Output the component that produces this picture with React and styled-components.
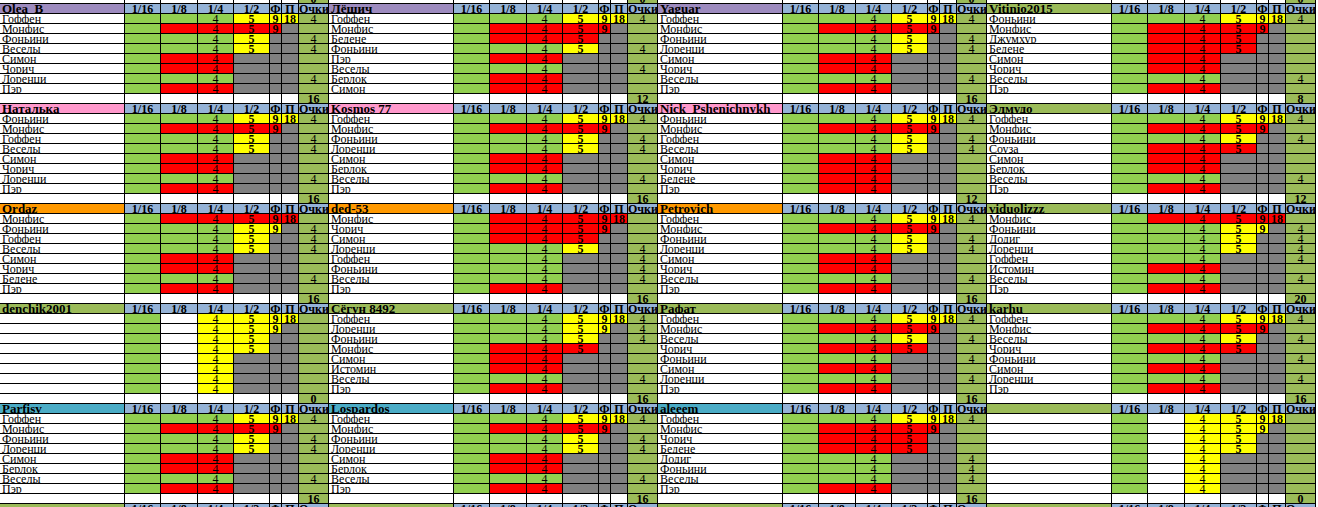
import React from "react";
import styled, { createGlobalStyle } from "styled-components";

// cell fills used in the sheet
const FILL = {
  g: "#92d050",
  r: "#ff0000",
  y: "#ffff00",
  x: "#808080",
  w: "#ffffff",
};

const HEAD = {
  purple: "#9d8bbf",
  pink: "#ff99cc",
  orange: "#ff9900",
  olive: "#9bbb59",
  teal: "#4bacc6",
};

// each letter is the fill of one stage column (1/16 .. П)
const PATTERNS = {
  A: "gggyyy",
  B: "grrrrx",
  C: "gggyxx",
  D: "grrrxx",
  E: "grrxxx",
  F: "gggxxx",
  G: "gggyyx",
  H: "grrrrr",
  P: "gwyyyy",
  Q: "gwyyyx",
  R: "gwyyxx",
  S: "gwyxxx",
};

const STAGE_VALUES = ["", "", "4", "5", "9", "18"];
const LABELS = ["1/16", "1/8", "1/4", "1/2", "Ф", "П", "Очки"];

const rows = (str) => str.split("|").map((r) => r.split(" "));
const EMPTY = rows(" P| Q| R| R| S| S| S| S");

const sections = [
  [
    { name: "Olea_B", color: "purple", rows: rows("Гоффен A|Монфис B|Фоньини C|Веселы C|Симон E|Чорич E|Лоренци F|Пэр E") },
    { name: "Лёшич", color: "purple", rows: rows("Гоффен A|Монфис B|Бедене D|Фоньини C|Пэр E|Веселы F|Берлок E|Симон E") },
    { name: "Yaguar", color: "purple", rows: rows("Гоффен A|Монфис B|Фоньини C|Лоренци C|Симон E|Чорич E|Веселы F|Пэр E") },
    { name: "Vitinio2015", color: "olive", rows: rows("Фоньини A|Монфис B|Джумхур D|Бедене D|Симон E|Чорич E|Веселы F|Пэр E") },
  ],
  [
    { name: "Наталька", color: "pink", rows: rows("Фоньини A|Монфис B|Гоффен C|Веселы C|Симон E|Чорич E|Лоренци F|Пэр E") },
    { name: "Kosmos 77", color: "pink", rows: rows("Гоффен A|Монфис B|Фоньини C|Лоренци C|Симон E|Берлок E|Веселы F|Пэр E") },
    { name: "Nick_Pshenichnykh", color: "pink", rows: rows("Фоньини A|Монфис B|Гоффен C|Веселы C|Симон E|Чорич E|Бедене E|Пэр E") },
    { name: "Элмудо", color: "olive", rows: rows("Гоффен A|Монфис B|Фоньини C|Соуза D|Симон E|Берлок E|Веселы F|Пэр E") },
  ],
  [
    { name: "Qrdaz", color: "orange", rows: rows("Монфис H|Фоньини G|Гоффен C|Веселы C|Симон E|Чорич E|Бедене F|Пэр E") },
    { name: "ded-53", color: "orange", rows: rows("Монфис H|Чорич B|Симон D|Лоренци C|Гоффен F|Фоньини F|Веселы F|Пэр E") },
    { name: "Petrovich", color: "orange", rows: rows("Гоффен A|Монфис B|Фоньини C|Лоренци C|Симон E|Чорич E|Веселы F|Пэр E") },
    { name: "viduolizzz", color: "olive", rows: rows("Монфис H|Фоньини G|Додиг C|Лоренци C|Гоффен F|Истомин E|Веселы F|Пэр E") },
  ],
  [
    { name: "denchik2001", color: "olive", rows: EMPTY },
    { name: "Сёгун 8492", color: "olive", rows: rows("Гоффен A|Лоренци G|Фоньини C|Монфис D|Симон E|Истомин E|Веселы F|Пэр E") },
    { name: "Рафат", color: "olive", rows: rows("Гоффен A|Монфис B|Веселы C|Чорич D|Фоньини F|Симон E|Лоренци F|Пэр E") },
    { name: "karhu", color: "olive", rows: rows("Гоффен A|Монфис B|Веселы C|Чорич D|Фоньини F|Симон E|Лоренци F|Пэр E") },
  ],
  [
    { name: "Parfisv", color: "teal", rows: rows("Гоффен A|Монфис B|Фоньини C|Лоренци C|Симон E|Берлок E|Веселы F|Пэр E") },
    { name: "Lospardos", color: "teal", rows: rows("Гоффен A|Монфис B|Фоньини C|Лоренци C|Симон E|Берлок E|Веселы F|Пэр E") },
    { name: "aleeem", color: "teal", rows: rows("Гоффен A|Монфис B|Чорич D|Бедене D|Додиг F|Фоньини F|Веселы F|Пэр E") },
    { name: "", color: "olive", rows: EMPTY },
  ],
  [
    { name: "", color: "olive", rows: [] },
    { name: "", color: "olive", rows: [] },
    { name: "", color: "olive", rows: [] },
    { name: "", color: "olive", rows: [] },
  ],
];

// a row earns 4 points when the 1/4 pick is green
const points = (code) => (PATTERNS[code][2] === "g" ? "4" : "");
const total = (block) =>
  block.rows.reduce((sum, [, code]) => sum + (points(code) ? 4 : 0), 0);

const GlobalStyle = createGlobalStyle`
  html, body {
    margin: 0;
    padding: 0;
    background: #ffffff;
  }
  body {
    font-family: "Liberation Serif", "Times New Roman", serif;
    color: #000;
  }
`;

const Sheet = styled.div`
  width: 1318px;
  height: 507px;
  overflow: hidden;
`;

const Scroll = styled.div`
  margin-top: -6px;
  display: flex;
  flex-direction: column;
`;

const SectionRow = styled.div`
  display: flex;
  width: 1330px;
`;

const Block = styled.div`
  flex: none;
  display: grid;
  grid-template-columns: 125px 36px 37px 36px 36px 12px 17px 30px;
  grid-auto-rows: 10px;
`;

const Cell = styled.div`
  box-sizing: border-box;
  border-right: 1px solid #000;
  border-bottom: 1px solid #000;
  background: ${(p) => p.$bg || "#fff"};
  font-size: 12px;
  line-height: 10px;
  font-weight: ${(p) => (p.$bold ? 700 : 400)};
  text-align: center;
  white-space: nowrap;
  overflow: hidden;
`;

const NameCell = styled(Cell)`
  text-align: left;
  padding-left: 2px;
`;

const HeadName = styled(NameCell)`
  font-weight: 700;
  font-size: 13px;
`;

const HeadLabel = styled(Cell)`
  background: #95b3d7;
  font-weight: 700;
`;

const Points = styled(Cell)`
  background: #9bbb59;
`;

const Header = ({ name, color }) => (
  <>
    <HeadName $bg={HEAD[color]}>{name}</HeadName>
    {LABELS.map((l) => (
      <HeadLabel key={l}>{l}</HeadLabel>
    ))}
  </>
);

const PlayerRow = ({ name, code }) => {
  const fills = PATTERNS[code];
  return (
    <>
      <NameCell>{name}</NameCell>
      {fills.split("").map((f, i) => (
        <Cell key={i} $bg={FILL[f]} $bold={i > 2}>
          {f === "x" || f === "w" || f === "g" && i < 2 ? "" : STAGE_VALUES[i]}
        </Cell>
      ))}
      <Points>{points(code)}</Points>
    </>
  );
};

const TotalRow = ({ value }) => (
  <>
    <NameCell />
    {STAGE_VALUES.map((_, i) => (
      <Cell key={i} />
    ))}
    <Points $bold>{value}</Points>
  </>
);

const App = () => (
  <>
    <GlobalStyle />
    <Sheet>
      <Scroll>
        <SectionRow>
          {[0, 1, 2, 3].map((i) => (
            <Block key={i}>
              <TotalRow value="0" />
            </Block>
          ))}
        </SectionRow>
        {sections.map((blocks, s) => (
          <SectionRow key={s}>
            {blocks.map((b, i) => (
              <Block key={i}>
                <Header name={b.name} color={b.color} />
                {b.rows.map(([name, code], r) => (
                  <PlayerRow key={r} name={name} code={code} />
                ))}
                {b.rows.length > 0 && <TotalRow value={total(b)} />}
              </Block>
            ))}
          </SectionRow>
        ))}
      </Scroll>
    </Sheet>
  </>
);

export default App;
